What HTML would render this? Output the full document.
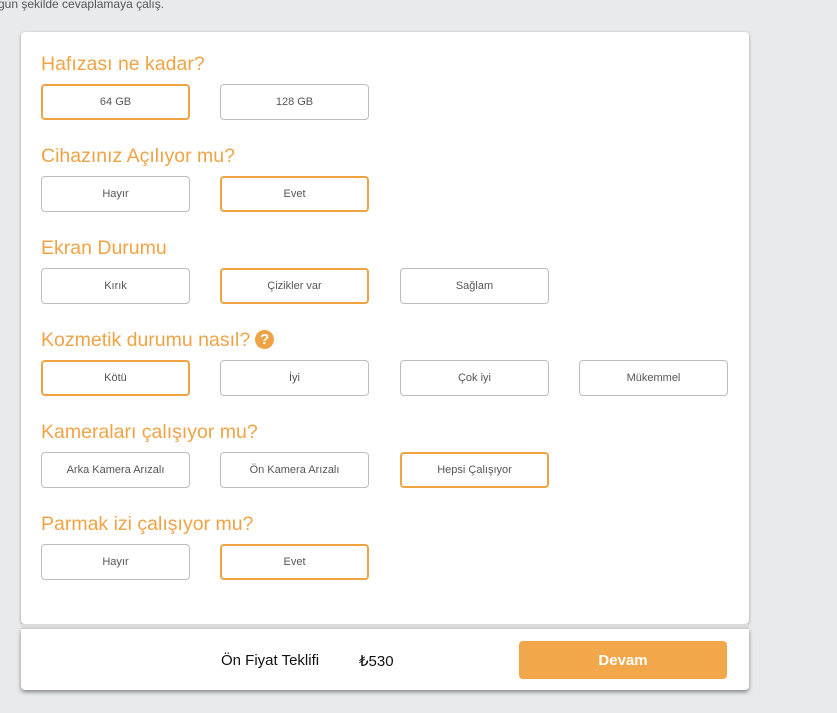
<!DOCTYPE html>
<html><head><meta charset="utf-8"><style>
*{box-sizing:border-box;margin:0;padding:0}
body{width:837px;height:713px;background:#e8ebec;font-family:"Liberation Sans",sans-serif;position:relative;overflow:hidden}
.top{position:absolute;left:-2px;top:-3px;font-size:12px;color:#555}
.card{position:absolute;left:21px;top:32px;width:728px;height:592px;background:#fff;border-radius:4px;box-shadow:0 1px 3px rgba(0,0,0,.35)}
.strip{position:absolute;left:21px;top:624px;width:728px;height:5px;background:#dcdcdc}
.foot{position:absolute;left:21px;top:629px;width:728px;height:61px;background:#fff;border-radius:0 0 4px 4px;box-shadow:0 2px 4px rgba(0,0,0,.45)}
h2{position:absolute;left:41px;font-size:19.5px;font-weight:normal;color:#f0a345;white-space:nowrap}
.b{position:absolute;width:149px;height:36px;border:1px solid #bdbdbd;border-radius:4px;font-size:11px;color:#555;display:flex;align-items:center;justify-content:center;background:#fff}
.b.s{border:2px solid #f0a345}
.q{display:inline-block;width:19px;height:19px;border-radius:50%;background:#f0a345;color:#fff;font-size:15px;font-weight:bold;text-align:center;line-height:19px;vertical-align:2px;margin-left:5px}
.dev{position:absolute;left:519px;top:641px;width:208px;height:38px;background:#f2a84a;border-radius:4px;color:#fff;font-size:15px;font-weight:bold;display:flex;align-items:center;justify-content:center}
.t{position:absolute;top:652px;font-size:15px;color:#111}
</style></head><body>
<div class="top">gun şekilde cevaplamaya çalış.</div>
<div class="card"></div>
<div class="strip"></div>
<div class="foot"></div>

<h2 style="top:53px">Hafızası ne kadar?</h2>
<div class="b s" style="left:41px;top:84px">64 GB</div>
<div class="b" style="left:220px;top:84px">128 GB</div>

<h2 style="top:145px">Cihazınız Açılıyor mu?</h2>
<div class="b" style="left:41px;top:176px">Hayır</div>
<div class="b s" style="left:220px;top:176px">Evet</div>

<h2 style="top:237px">Ekran Durumu</h2>
<div class="b" style="left:41px;top:268px">Kırık</div>
<div class="b s" style="left:220px;top:268px">Çizikler var</div>
<div class="b" style="left:400px;top:268px">Sağlam</div>

<h2 style="top:329px">Kozmetik durumu nasıl?<span class="q">?</span></h2>
<div class="b s" style="left:41px;top:360px">Kötü</div>
<div class="b" style="left:220px;top:360px">İyi</div>
<div class="b" style="left:400px;top:360px">Çok iyi</div>
<div class="b" style="left:579px;top:360px">Mükemmel</div>

<h2 style="top:421px">Kameraları çalışıyor mu?</h2>
<div class="b" style="left:41px;top:452px">Arka Kamera Arızalı</div>
<div class="b" style="left:220px;top:452px">Ön Kamera Arızalı</div>
<div class="b s" style="left:400px;top:452px">Hepsi Çalışıyor</div>

<h2 style="top:513px">Parmak izi çalışıyor mu?</h2>
<div class="b" style="left:41px;top:544px">Hayır</div>
<div class="b s" style="left:220px;top:544px">Evet</div>

<div class="t" style="left:221px">Ön Fiyat Teklifi</div>
<div class="t" style="left:359px">₺530</div>
<div class="dev">Devam</div>
</body></html>
